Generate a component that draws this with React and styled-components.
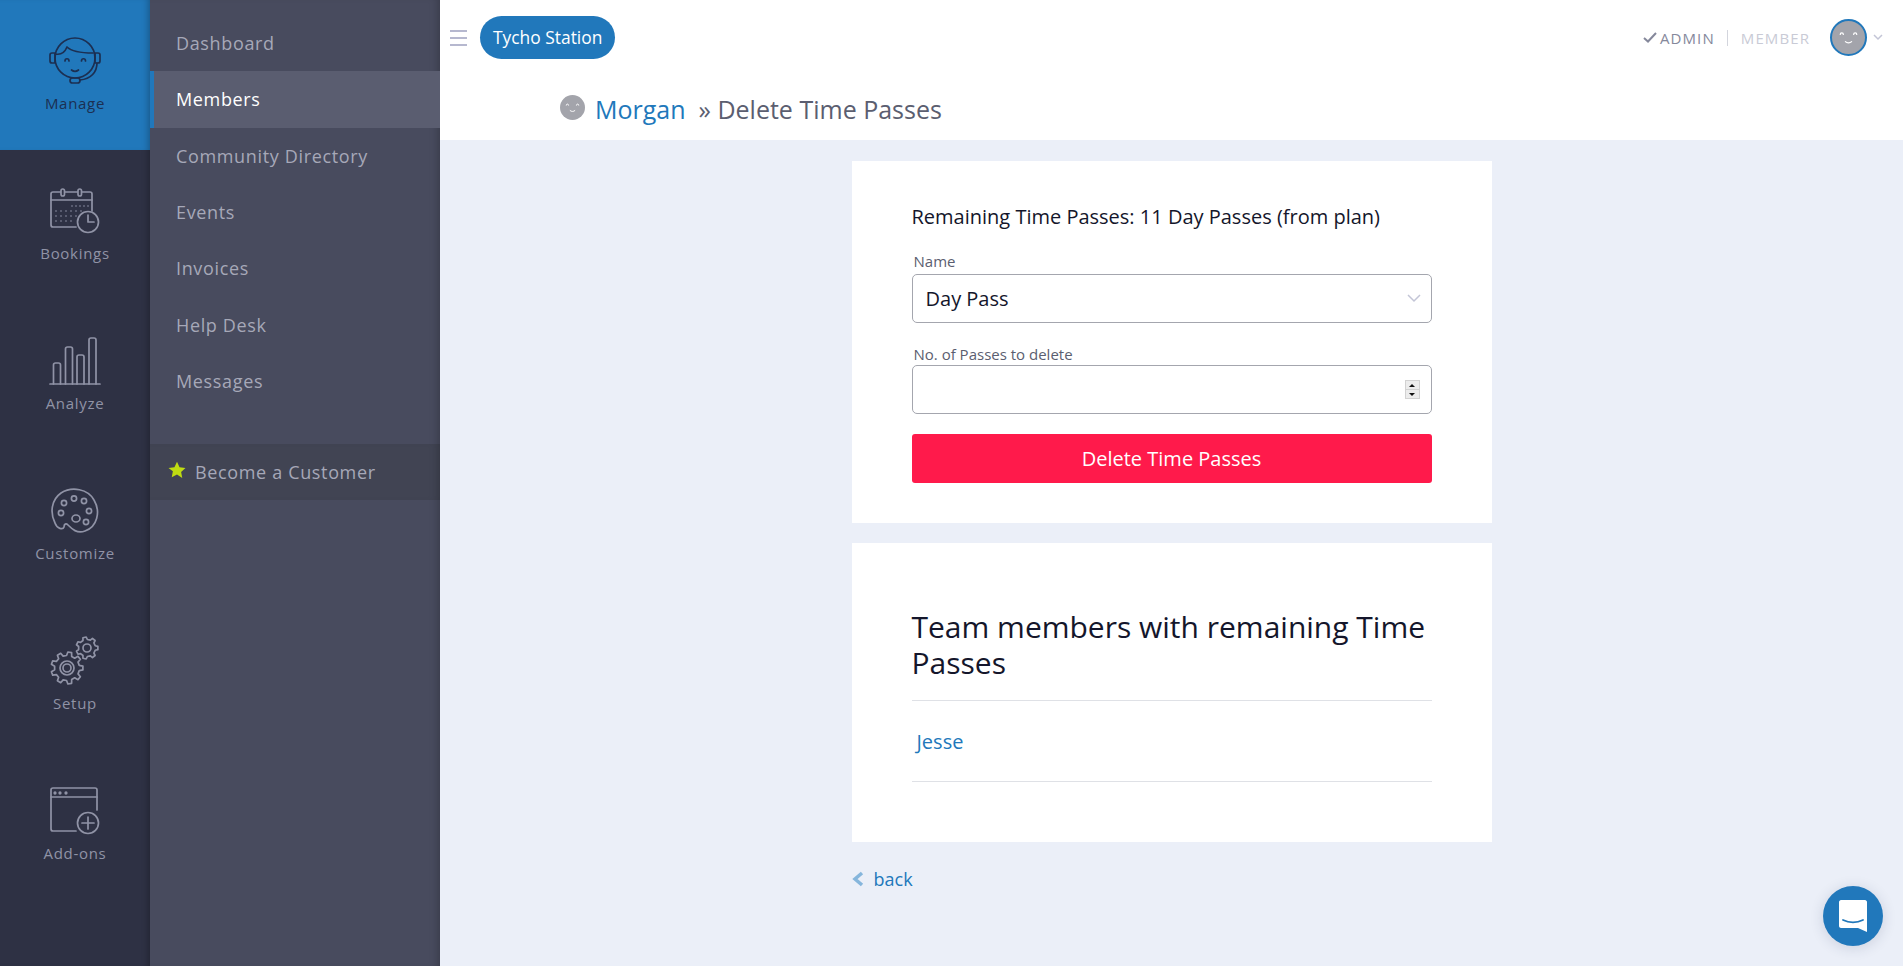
import React from 'react';
import styled, { createGlobalStyle } from 'styled-components';

const colors = {
  rail: '#2e3144',
  blue: '#2178bb',
  nav: '#484b5e',
  navActive: '#5a5d70',
  navBand: '#414453',
  navText: '#a6a8b8',
  railIcon: '#9093a6',
  navy: '#1c2f52',
  page: '#ebeff8',
  ink: '#14162b',
  slate: '#5b5e70',
  red: '#ff1a4b',
  border: '#a4a6ae',
};

const GlobalStyle = createGlobalStyle`
  html, body { margin: 0; padding: 0; height: 100%; }
  body { font-family: 'Open Sans', 'Liberation Sans', sans-serif; background: ${colors.page}; }
  * { box-sizing: border-box; }
`;

const Layout = styled.div`
  display: flex;
  height: 966px;
  overflow: hidden;
`;

// Far left icon rail
const Rail = styled.nav`
  width: 150px;
  flex-shrink: 0;
  background: ${colors.rail};
  box-shadow: inset -6px 0 6px -4px rgba(0, 0, 0, 0.25);
`;

const RailItem = styled.a`
  display: flex;
  flex-direction: column;
  align-items: center;
  height: 150px;
  padding-top: 30px;
  background: ${props => (props.$active ? colors.blue : 'transparent')};
  box-shadow: ${props => (props.$active ? 'inset -6px 0 6px -4px rgba(0, 0, 0, 0.25)' : 'none')};
  color: ${props => (props.$active ? colors.navy : colors.railIcon)};
`;

const RailLabel = styled.span`
  margin-top: 2px;
  font-size: 15px;
  line-height: 22px;
  letter-spacing: 0.7px;
`;

const IconSvg = styled.svg`
  display: block;
  width: 60px;
  height: 60px;
  fill: none;
  stroke: currentColor;
  stroke-width: 1.7;
  stroke-linecap: round;
  stroke-linejoin: round;
`;

// Second column with text links
const SideNav = styled.nav`
  width: 290px;
  flex-shrink: 0;
  padding-top: 15px;
  background: ${colors.nav};
  box-shadow: inset -8px 0 8px -6px rgba(0, 0, 0, 0.22);
`;

const NavLink = styled.a`
  display: flex;
  align-items: center;
  height: 56.3px;
  padding-left: ${props => (props.$active ? '22px' : '26px')};
  border-left: ${props => (props.$active ? `4px solid ${colors.blue}` : 'none')};
  background: ${props => (props.$active ? colors.navActive : 'transparent')};
  color: ${props => (props.$active ? '#ffffff' : colors.navText)};
  font-size: 18px;
  letter-spacing: 0.65px;
`;

const CustomerBand = styled.a`
  display: flex;
  align-items: center;
  gap: 9px;
  height: 56px;
  margin-top: 35px;
  padding-left: 18px;
  background: ${colors.navBand};
  box-shadow: inset -8px 0 8px -6px rgba(0, 0, 0, 0.22);
  color: ${colors.navText};
  font-size: 18px;
  letter-spacing: 0.65px;
`;

const Star = styled.svg`
  width: 18px;
  height: 18px;
  margin-top: -4px;
  fill: #bfdc12;
`;

const Main = styled.main`
  flex: 1;
  min-width: 0;
  display: flex;
  flex-direction: column;
`;

const Header = styled.header`
  height: 140px;
  flex-shrink: 0;
  background: #fff;
`;

const TopBar = styled.div`
  display: flex;
  align-items: center;
  height: 75px;
  padding: 0 20px 0 10px;
`;

const Burger = styled.div`
  display: flex;
  flex-direction: column;
  gap: 5px;
  width: 17px;
  margin-right: 13px;
  span {
    display: block;
    height: 2px;
    background: #b6b8cf;
  }
`;

const Pill = styled.a`
  display: flex;
  align-items: center;
  height: 43px;
  padding: 0 13px 2px;
  border-radius: 22px;
  background: ${colors.blue};
  color: #fff;
  font-size: 17.4px;
`;

const RoleSwitch = styled.div`
  display: flex;
  align-items: center;
  margin-left: auto;
  font-size: 15px;
  letter-spacing: 1.1px;
`;

const Role = styled.span`
  display: flex;
  align-items: center;
  gap: 3px;
  color: ${props => (props.$on ? '#85889b' : '#c9cbd6')};
`;

const RoleDivider = styled.span`
  width: 1px;
  height: 16px;
  margin: 0 13px 0 12px;
  background: #d3d5dd;
`;

const AccountFace = styled.div`
  width: 37px;
  height: 37px;
  margin-left: 20px;
  border: 2px solid ${colors.blue};
  border-radius: 50%;
  background: #a3a4ab;
`;

const AccountCaret = styled.svg`
  width: 10px;
  height: 7px;
  margin-left: 6px;
  fill: none;
  stroke: #c3c5d6;
  stroke-width: 1.5;
`;

const TitleRow = styled.div`
  display: flex;
  align-items: center;
  height: 65px;
  padding: 2px 0 0 120px;
`;

const TitleFace = styled.div`
  width: 25px;
  height: 25px;
  margin-right: 10px;
  margin-top: -2px;
  border-radius: 50%;
  background: #a3a4ab;
`;

const TitleLink = styled.a`
  color: ${colors.blue};
  font-size: 25px;
`;

const TitleText = styled.span`
  margin-left: 13px;
  color: ${colors.slate};
  font-size: 25px;
`;

const Content = styled.div`
  width: 640px;
  margin: 0 auto;
  padding-top: 21px;
`;

const Card = styled.section`
  background: #fff;
  padding: ${props => props.$pad || '0 60px'};
  margin-bottom: ${props => props.$gap || '19px'};
`;

const Remaining = styled.p`
  margin: 0;
  padding-top: 42px;
  color: ${colors.ink};
  font-size: 20px;
  line-height: 28px;
`;

const FieldLabel = styled.label`
  display: block;
  margin: ${props => props.$top} 0 ${props => props.$gap} 2px;
  color: ${colors.slate};
  font-size: 15px;
  line-height: 20px;
`;

const FieldWrap = styled.div`
  position: relative;
`;

const SelectBox = styled.select`
  display: block;
  width: 100%;
  height: 49px;
  padding: 0 40px 0 13px;
  appearance: none;
  border: 1px solid ${colors.border};
  border-radius: 5px;
  background: #fff;
  color: ${colors.ink};
  font-family: inherit;
  font-size: 20px;
`;

const NumberBox = styled.input`
  display: block;
  width: 100%;
  height: 49px;
  padding: 0 30px 0 13px;
  border: 1px solid ${colors.border};
  border-radius: 5px;
  background: #fff;
  font-family: inherit;
  font-size: 20px;
  appearance: textfield;
  &::-webkit-inner-spin-button,
  &::-webkit-outer-spin-button {
    appearance: none;
    margin: 0;
  }
`;

const Chevron = styled.svg`
  position: absolute;
  right: 11px;
  top: 20px;
  width: 14px;
  height: 9px;
  fill: none;
  stroke: #c3c5d6;
  stroke-width: 1.5;
`;

// Old style stepper buttons that sit over the number field
const Stepper = styled.div`
  position: absolute;
  right: 12px;
  top: 15px;
  display: flex;
  flex-direction: column;
  width: 15px;
  height: 19px;
`;

const StepButton = styled.span`
  flex: 1;
  display: flex;
  align-items: center;
  justify-content: center;
  border: 1px solid #d2d2d2;
  border-top-width: ${props => (props.$down ? '0' : '1px')};
  background: #ececec;
  &::after {
    content: '';
    border-left: 3px solid transparent;
    border-right: 3px solid transparent;
    border-bottom: ${props => (props.$down ? 'none' : '3px solid #111')};
    border-top: ${props => (props.$down ? '3px solid #111' : 'none')};
  }
`;

const DangerButton = styled.button`
  display: block;
  width: 100%;
  height: 49px;
  margin-top: 20px;
  border: none;
  border-radius: 3px;
  background: ${colors.red};
  color: #fff;
  font-family: inherit;
  font-size: 20px;
`;

const TeamHeading = styled.h2`
  margin: 0;
  padding: 66px 0 19px;
  border-bottom: 1px solid #dfe1e6;
  color: ${colors.ink};
  font-size: 30px;
  font-weight: 400;
  line-height: 36px;
`;

const TeamRow = styled.div`
  display: flex;
  align-items: center;
  height: 81px;
  padding-left: 5px;
  border-bottom: 1px solid #dfe1e6;
  color: ${colors.blue};
  font-size: 20px;
`;

const BackLink = styled.a`
  display: flex;
  align-items: center;
  gap: 10px;
  margin-top: 25px;
  color: ${colors.blue};
  font-size: 18px;
`;

const ChatFab = styled.div`
  position: fixed;
  left: 1823px;
  top: 886px;
  display: flex;
  align-items: center;
  justify-content: center;
  width: 60px;
  height: 60px;
  border-radius: 50%;
  background: ${colors.blue};
  box-shadow: 0 2px 14px rgba(40, 50, 90, 0.16);
`;

// Builds a cog outline around cx/cy
const gearPath = (cx, cy, outer, inner, teeth) => {
  const pts = [];
  const step = (Math.PI * 2) / teeth;
  for (let i = 0; i < teeth; i++) {
    const a = i * step;
    [[-0.3, inner], [-0.17, outer], [0.17, outer], [0.3, inner]].forEach(([f, r]) => {
      const t = a + f * step;
      pts.push(`${(cx + Math.cos(t) * r).toFixed(2)} ${(cy + Math.sin(t) * r).toFixed(2)}`);
    });
  }
  return 'M' + pts.join('L') + 'Z';
};

const ManageIcon = () => (
  <IconSvg viewBox="0 0 60 60">
    <circle cx="30" cy="28" r="20" />
    <path d="M10.500 24c5 1 9-1 11.500-7 5 5 15 6 26 6" />
    <path d="M10 23H7c-1 0-2 1-2 2v6c0 1 1 2 2 2h3z" />
    <path d="M50 23h3c1 0 2 1 2 2v6c0 1-1 2-2 2h-3z" />
    <path d="M52 33c0 9-6 16-17 17" />
    <rect x="25" y="48" width="10" height="5" rx="2.500" />
    <path d="M20 31c0-3 4-3 4 0M36.500 31c0-3 4-3 4 0M26.500 40c2 1.500 5 1.500 7 0" />
  </IconSvg>
);

const calendarDots = [
  [27, 26], [31, 26], [35, 26], [39, 26], [43, 26],
  [11, 31], [16, 31], [21, 31], [26, 31], [31, 31], [36, 31],
  [11, 36], [16, 36], [21, 36], [26, 36], [31, 36],
  [11, 41], [16, 41], [21, 41], [26, 41],
];

const BookingsIcon = () => (
  <IconSvg viewBox="0 0 60 60">
    <path d="M31 47H8c-1 0-2-1-2-2V14c0-1 1-2 2-2h37c1 0 2 1 2 2v17" />
    <path d="M6 20h41" />
    <rect x="16" y="9" width="3.500" height="7" rx="1.700" fill="#2e3144" />
    <rect x="33" y="9" width="3.500" height="7" rx="1.700" fill="#2e3144" />
    <circle cx="43" cy="42" r="10.500" />
    <path d="M43 35v7h6" />
    {calendarDots.map(([x, y]) => (
      <circle key={`${x}-${y}`} cx={x} cy={y} r="0.8" fill="currentColor" stroke="none" />
    ))}
  </IconSvg>
);

const AnalyzeIcon = () => (
  <IconSvg viewBox="0 0 60 60">
    <path d="M5 54h50" />
    <path d="M8.500 54V35c0-1 1-2 2-2h3c1 0 2 1 2 2v19" />
    <path d="M20.500 54V19c0-1 1-2 2-2h3c1 0 2 1 2 2v35" />
    <path d="M32 54V27c0-1 1-2 2-2h3c1 0 2 1 2 2v27" />
    <path d="M44 54V10c0-1 1-2 2-2h3c1 0 2 1 2 2v44" />
  </IconSvg>
);

const CustomizeIcon = () => (
  <IconSvg viewBox="0 0 60 60">
    <path d="M10 43C5 33 6 20 16 13c11-7 27-4 33 7 7 12 3 27-9 31-8 3-13-2-17-6-2-2-4-1-4 2-1 3-7 2-9-4z" />
    <circle cx="19" cy="23" r="2.600" />
    <circle cx="29" cy="18.500" r="2.600" />
    <circle cx="39" cy="21" r="2.600" />
    <circle cx="44" cy="31" r="2.600" />
    <circle cx="41" cy="42" r="2.600" />
    <circle cx="16" cy="33" r="2.600" />
    <ellipse cx="31" cy="38.500" rx="4" ry="3.500" />
  </IconSvg>
);

const SetupIcon = () => (
  <IconSvg viewBox="0 0 60 60">
    <path d={gearPath(22, 38, 16, 12.5, 9)} />
    <circle cx="22" cy="38" r="7" />
    <circle cx="22" cy="38" r="4" />
    <path d={gearPath(42, 18, 11, 8.5, 7)} />
    <circle cx="42" cy="18" r="4" />
  </IconSvg>
);

const AddonsIcon = () => (
  <IconSvg viewBox="0 0 60 60">
    <path d="M31 51H8c-1 0-2-1-2-2V10c0-1 1-2 2-2h42c1 0 2 1 2 2v20" />
    <path d="M6 17h46" />
    <circle cx="10" cy="13" r="0.800" fill="currentColor" />
    <circle cx="15" cy="13" r="0.800" fill="currentColor" />
    <circle cx="21" cy="13" r="0.800" fill="currentColor" />
    <circle cx="43" cy="43" r="10.500" />
    <path d="M43 37v12M37 43h12" />
  </IconSvg>
);

const Smile = ({ size }) => (
  <svg width={size} height={size} viewBox="0 0 32 32" fill="none" stroke="#fff" strokeWidth="1.2" strokeLinecap="round">
    <path d="M8 13c0-2 3-2 3 0M21 13c0-2 3-2 3 0M13 20c1.500 1.500 4.500 1.500 6 0" />
  </svg>
);

const railItems = [
  { label: 'Manage', Icon: ManageIcon, active: true },
  { label: 'Bookings', Icon: BookingsIcon },
  { label: 'Analyze', Icon: AnalyzeIcon },
  { label: 'Customize', Icon: CustomizeIcon },
  { label: 'Setup', Icon: SetupIcon },
  { label: 'Add-ons', Icon: AddonsIcon },
];

const navLinks = ['Dashboard', 'Members', 'Community Directory', 'Events', 'Invoices', 'Help Desk', 'Messages'];

export default function App() {
  return (
    <Layout>
      <GlobalStyle />
      <Rail>
        {railItems.map(({ label, Icon, active }) => (
          <RailItem key={label} $active={active}>
            <Icon />
            <RailLabel>{label}</RailLabel>
          </RailItem>
        ))}
      </Rail>
      <SideNav>
        {navLinks.map(link => (
          <NavLink key={link} $active={link === 'Members'}>{link}</NavLink>
        ))}
        <CustomerBand>
          <Star viewBox="0 0 24 24">
            <path d="M12 1l3.400 7.300 7.900 1-5.800 5.500 1.500 7.900L12 18l-7 3.700 1.500-7.900L.7 9.300l7.900-1z" />
          </Star>
          Become a Customer
        </CustomerBand>
      </SideNav>
      <Main>
        <Header>
          <TopBar>
            <Burger><span /><span /><span /></Burger>
            <Pill>Tycho Station</Pill>
            <RoleSwitch>
              <Role $on>
                <svg width="14" height="11" viewBox="0 0 14 11" fill="none" stroke="#85889b" strokeWidth="2">
                  <path d="M1 6l4 3.500L13 1" />
                </svg>
                ADMIN
              </Role>
              <RoleDivider />
              <Role>MEMBER</Role>
              <AccountFace><Smile size={33} /></AccountFace>
              <AccountCaret viewBox="0 0 10 7">
                <path d="M1 1l4 4 4-4" />
              </AccountCaret>
            </RoleSwitch>
          </TopBar>
          <TitleRow>
            <TitleFace><Smile size={25} /></TitleFace>
            <TitleLink>Morgan</TitleLink>
            <TitleText>» Delete Time Passes</TitleText>
          </TitleRow>
        </Header>
        <Content>
          <Card $pad="0 60px 40px" $gap="20px">
            <Remaining>Remaining Time Passes: 11 Day Passes (from plan)</Remaining>
            <FieldLabel $top="20px" $gap="3px">Name</FieldLabel>
            <FieldWrap>
              <SelectBox defaultValue="Day Pass">
                <option>Day Pass</option>
              </SelectBox>
              <Chevron viewBox="0 0 14 9">
                <path d="M1 1l6 6 6-6" />
              </Chevron>
            </FieldWrap>
            <FieldLabel $top="21px" $gap="1px">No. of Passes to delete</FieldLabel>
            <FieldWrap>
              <NumberBox type="number" />
              <Stepper>
                <StepButton />
                <StepButton $down />
              </Stepper>
            </FieldWrap>
            <DangerButton>Delete Time Passes</DangerButton>
          </Card>
          <Card $pad="0 60px 60px">
            <TeamHeading>Team members with remaining Time Passes</TeamHeading>
            <TeamRow>Jesse</TeamRow>
          </Card>
          <BackLink>
            <svg width="12" height="16" viewBox="0 0 12 16" fill="none" stroke="#86b6dc" strokeWidth="3.500">
              <path d="M10 2L3 8l7 6" />
            </svg>
            back
          </BackLink>
        </Content>
      </Main>
      <ChatFab>
        <svg width="30" height="34" viewBox="0 0 30 34">
          <path fill="#fff" d="M3 1h24c1 0 2 1 2 2v30l-9-4H3c-1 0-2-1-2-2V3c0-1 1-2 2-2z" />
          <path fill="none" stroke={colors.blue} strokeWidth="1.800" strokeLinecap="round" d="M5 21c6 3 14 3 20 0" />
        </svg>
      </ChatFab>
    </Layout>
  );
}
